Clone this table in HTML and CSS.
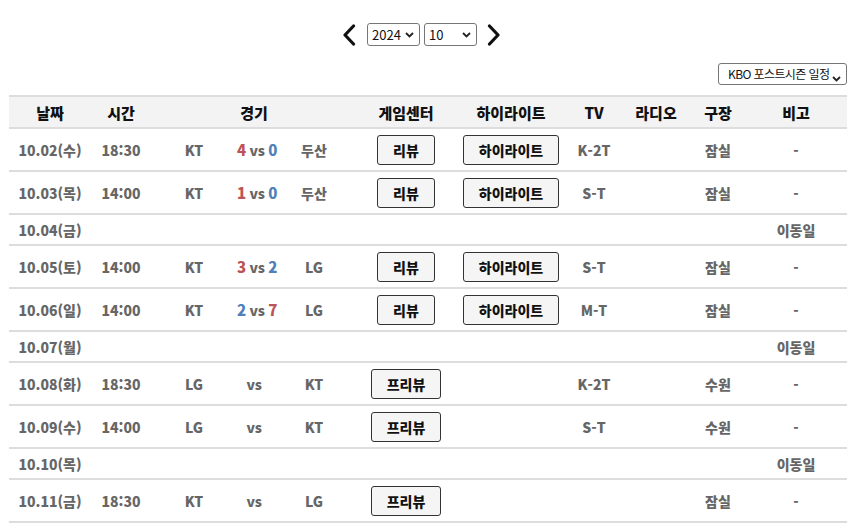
FILE: index.html
```html
<!DOCTYPE html>
<html lang="ko">
<head>
<meta charset="utf-8">
<link rel="stylesheet" href="styles.css">
</head>
<body>
<div class="page">
  <div class="nav">
    <a class="arrow"><svg width="14" height="22" viewBox="0 0 14 22"><path d="M11.5 2 L3 11 L11.5 20" fill="none" stroke="#111" stroke-width="3.2" stroke-linecap="round" stroke-linejoin="round"/></svg></a>
    <span class="selwrap"><select class="sel sel-year"><option>2024</option></select><svg class="chev" width="9" height="6" viewBox="0 0 9 6"><path d="M1 1 L4.5 4.5 L8 1" fill="none" stroke="#222" stroke-width="1.8"/></svg></span>
    <span class="selwrap"><select class="sel sel-month"><option>10</option></select><svg class="chev" width="9" height="6" viewBox="0 0 9 6"><path d="M1 1 L4.5 4.5 L8 1" fill="none" stroke="#222" stroke-width="1.8"/></svg></span>
    <a class="arrow"><svg width="14" height="22" viewBox="0 0 14 22"><path d="M2.5 2 L11 11 L2.5 20" fill="none" stroke="#111" stroke-width="3.2" stroke-linecap="round" stroke-linejoin="round"/></svg></a>
  </div>
  <div class="filter">
    <span class="selwrap"><select class="sel sel-kind"><option>KBO 포스트시즌 일정</option></select><svg class="chev" width="9" height="6" viewBox="0 0 9 6"><path d="M1 1 L4.5 4.5 L8 1" fill="none" stroke="#222" stroke-width="1.8"/></svg></span>
  </div>
  <table class="sched">
    <colgroup>
      <col style="width:82px"><col style="width:60px"><col style="width:86px"><col style="width:34px"><col style="width:86px"><col style="width:98px"><col style="width:112px"><col style="width:54px"><col style="width:70px"><col style="width:54px"><col style="width:102px">
    </colgroup>
    <thead>
      <tr><th>날짜</th><th>시간</th><th colspan="3">경기</th><th>게임센터</th><th>하이라이트</th><th>TV</th><th>라디오</th><th>구장</th><th>비고</th></tr>
    </thead>
    <tbody>
      <tr class="game"><td>10.02(수)</td><td>18:30</td><td>KT</td><td class="score"><span class="win">4</span> vs <span class="lose">0</span></td><td>두산</td><td><button class="btn">리뷰</button></td><td><button class="btn">하이라이트</button></td><td>K-2T</td><td></td><td>잠실</td><td>-</td></tr>
      <tr class="game"><td>10.03(목)</td><td>14:00</td><td>KT</td><td class="score"><span class="win">1</span> vs <span class="lose">0</span></td><td>두산</td><td><button class="btn">리뷰</button></td><td><button class="btn">하이라이트</button></td><td>S-T</td><td></td><td>잠실</td><td>-</td></tr>
      <tr class="off"><td>10.04(금)</td><td colspan="9"></td><td>이동일</td></tr>
      <tr class="game"><td>10.05(토)</td><td>14:00</td><td>KT</td><td class="score"><span class="win">3</span> vs <span class="lose">2</span></td><td>LG</td><td><button class="btn">리뷰</button></td><td><button class="btn">하이라이트</button></td><td>S-T</td><td></td><td>잠실</td><td>-</td></tr>
      <tr class="game"><td>10.06(일)</td><td>14:00</td><td>KT</td><td class="score"><span class="lose">2</span> vs <span class="win">7</span></td><td>LG</td><td><button class="btn">리뷰</button></td><td><button class="btn">하이라이트</button></td><td>M-T</td><td></td><td>잠실</td><td>-</td></tr>
      <tr class="off"><td>10.07(월)</td><td colspan="9"></td><td>이동일</td></tr>
      <tr class="game"><td>10.08(화)</td><td>18:30</td><td>LG</td><td class="score">vs</td><td>KT</td><td><button class="btn">프리뷰</button></td><td></td><td>K-2T</td><td></td><td>수원</td><td>-</td></tr>
      <tr class="game"><td>10.09(수)</td><td>14:00</td><td>LG</td><td class="score">vs</td><td>KT</td><td><button class="btn">프리뷰</button></td><td></td><td>S-T</td><td></td><td>수원</td><td>-</td></tr>
      <tr class="off"><td>10.10(목)</td><td colspan="9"></td><td>이동일</td></tr>
      <tr class="game"><td>10.11(금)</td><td>18:30</td><td>KT</td><td class="score">vs</td><td>LG</td><td><button class="btn">프리뷰</button></td><td></td><td></td><td></td><td>잠실</td><td>-</td></tr>
    </tbody>
  </table>
</div>
</body>
</html>
```
FILE: styles.css
```css
* { box-sizing: border-box; }
html, body { margin: 0; padding: 0; background: #fff; }
body {
  font-family: "Noto Sans CJK KR", "Noto Sans", sans-serif;
  color: #111;
}
.page { padding: 0 11px 0 9px; }
.nav {
  display: flex;
  justify-content: center;
  align-items: center;
  gap: 4px;
  padding: 23px 13px 0 0;
  height: 46px;
}
.arrow { display: flex; align-items: center; width: 14px; height: 22px; }
.nav .arrow:first-child { margin-right: 7px; }
.nav .arrow:last-child { margin-left: 6px; }
.selwrap { position: relative; display: inline-flex; }
.chev { position: absolute; right: 6px; top: 50%; margin-top: -3px; pointer-events: none; }
.sel {
  -webkit-appearance: none;
  appearance: none;
  font-family: "Noto Sans CJK KR", "Noto Sans", sans-serif;
  font-size: 13px;
  color: #111;
  border: 1px solid #767676;
  border-radius: 3px;
  background: #fff;
  height: 23px;
  padding: 0 0 0 4px;
  line-height: 21px;
}
.sel-year { width: 53px; }
.sel-month { width: 53px; }
.filter {
  display: flex;
  justify-content: flex-end;
  padding-top: 17px;
  height: 49px;
}
.sel-kind { width: 129px; height: 22px; font-size: 12px; padding: 0 0 0 9px; letter-spacing: -0.6px; line-height: 20px; }
.sched {
  width: 838px;
  border-collapse: collapse;
  table-layout: fixed;
  border-top: 2px solid #ddd;
}
.sched th {
  background: #f3f3f3;
  height: 32px;
  font-size: 15px;
  font-weight: 900;
  color: #111;
  text-align: center;
  border-bottom: 2px solid #ddd;
  padding: 0;
}
.sched td {
  font-size: 14px;
  font-weight: 900;
  color: #666;
  text-align: center;
  border-bottom: 2px solid #ddd;
  padding: 0;
  white-space: nowrap;
}
.sched tr.game td { height: 43px; }
.sched tr.off td { height: 31px; }
.score { font-size: 14px; letter-spacing: -0.3px; }
.win { color: #bb5457; font-size: 15px; }
.lose { color: #4f80b8; font-size: 15px; }
.btn {
  font-family: "Noto Sans CJK KR", "Noto Sans", sans-serif;
  font-size: 14px;
  font-weight: 900;
  color: #111;
  background: #f5f5f5;
  border: 1px solid #333;
  border-radius: 3px;
  height: 30px;
  padding: 0 15px;
  line-height: 26px;
  vertical-align: middle;
}
```
